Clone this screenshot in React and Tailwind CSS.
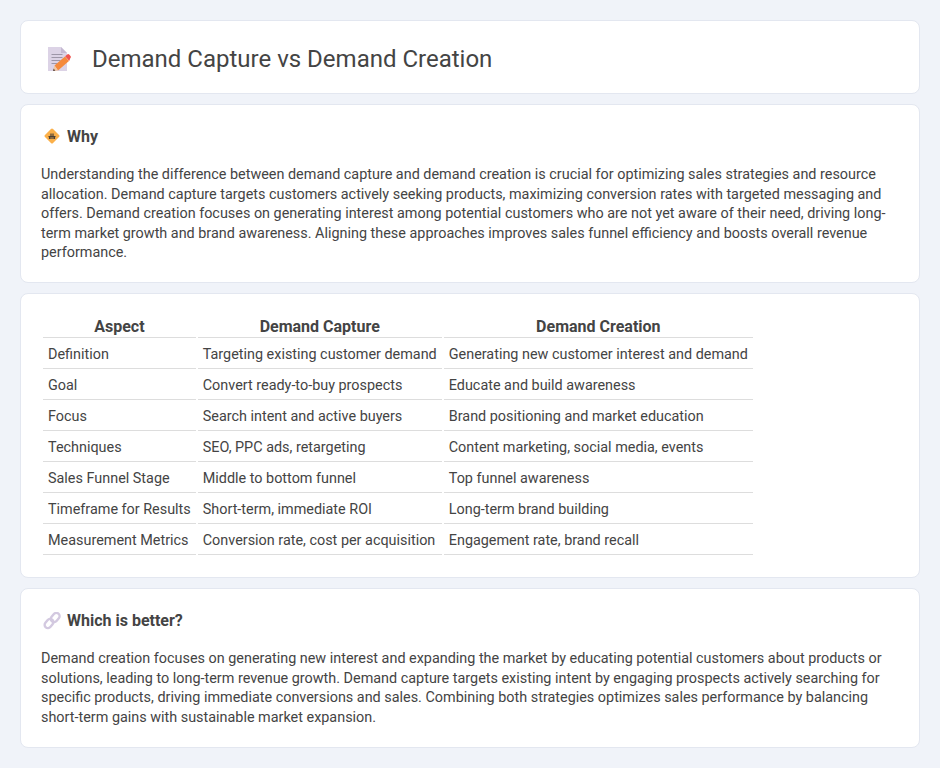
const rows = [
  ["Definition", "Targeting existing customer demand", "Generating new customer interest and demand"],
  ["Goal", "Convert ready-to-buy prospects", "Educate and build awareness"],
  ["Focus", "Search intent and active buyers", "Brand positioning and market education"],
  ["Techniques", "SEO, PPC ads, retargeting", "Content marketing, social media, events"],
  ["Sales Funnel Stage", "Middle to bottom funnel", "Top funnel awareness"],
  ["Timeframe for Results", "Short-term, immediate ROI", "Long-term brand building"],
  ["Measurement Metrics", "Conversion rate, cost per acquisition", "Engagement rate, brand recall"],
];

function MemoIcon() {
  return (
    <svg width="24" height="28" viewBox="0 0 24 28" className="shrink-0">
      <path d="M1 4h13l6 6v18H1z" fill="#dcd3e6" />
      <path d="M14 4l6 6h-6z" fill="#c5b9d2" />
      <path d="M4.500 11.500h11M4.500 14.500h11M4.500 17.500h9M4.500 20.500h6" stroke="#9d96a8" strokeWidth="1" />
      <path d="M7.500 22.500L18 13.500l4 4.500-11 9.500z" fill="#f58a3c" />
      <path d="M18.200 13.300l2-1.800a1.500 1.500 0 0 1 2 .1l1.300 1.500a1.500 1.500 0 0 1-.1 2l-1.200 2.900z" fill="#f0544f" />
      <path d="M7.500 22.500L6 28l5-.5z" fill="#f3c7a0" />
      <path d="M6.600 25.500L6 28l2.400-.3z" fill="#5a4a44" />
    </svg>
  );
}

function SignIcon() {
  return (
    <svg width="18" height="18" viewBox="0 0 18 18" className="shrink-0">
      <rect x="3.300" y="2.300" width="11.400" height="11.400" rx="1.500" transform="rotate(45 9 8)" fill="#fbb04a" />
      <path d="M6.500 11V8M8 11V5.500M10 11V5.500M11.500 11V8M5.500 8.500h7" stroke="#4a3f35" strokeWidth="1.200" fill="none" />
    </svg>
  );
}

function LinkIcon() {
  return (
    <svg width="18" height="18" viewBox="0 0 18 18" className="shrink-0">
      <g fill="none" stroke="#d3c9e0" strokeWidth="2.400">
        <rect x="9" y="0.500" width="6.400" height="10" rx="3.200" transform="rotate(40 12.200 5.500)" />
        <rect x="2.800" y="6.500" width="6.400" height="10" rx="3.200" transform="rotate(40 6 11.500)" />
      </g>
    </svg>
  );
}

function Card({ className = "", children }) {
  return <section className={"bg-white border border-[#e3e7f0] rounded-lg " + className}>{children}</section>;
}

function Heading({ icon, children }) {
  return (
    <h2 className="flex items-center gap-[6px] pl-[2px] text-base leading-[22px] font-bold text-[#444444]">
      {icon}
      {children}
    </h2>
  );
}

export default function App() {
  return (
    <div className="min-h-[768px] bg-[#f0f3f9] px-5 pt-5 pb-5 flex flex-col gap-[10px] text-[14.4px] leading-[19.5px] text-[#444444] font-['Roboto',sans-serif]">
      <Card className="h-[74px] flex items-center pl-[26px] gap-[21px]">
        <MemoIcon />
        <h1 className="mt-[3px] text-2xl leading-9 font-normal text-[#444444]">Demand Capture vs Demand Creation</h1>
      </Card>

      <Card className="h-[179px] pl-5 pr-5 pt-[21px]">
        <Heading icon={<SignIcon />}>Why</Heading>
        <p className="mt-[17px]">
          Understanding the difference between demand capture and demand creation is crucial for optimizing sales strategies and resource allocation. Demand capture targets customers actively seeking products, maximizing conversion rates with targeted messaging and offers. Demand creation focuses on generating interest among potential customers who are not yet aware of their need, driving long-term market growth and brand awareness. Aligning these approaches improves sales funnel efficiency and boosts overall revenue performance.
        </p>
      </Card>

      <Card className="h-[285px] pl-5 pt-[21px]">
        <table className="border-separate border-spacing-[2px]">
          <thead>
            <tr>
              {["Aspect", "Demand Capture", "Demand Creation"].map((h) => (
                <th key={h} className="px-[5px] text-center text-base leading-5 font-bold border-b border-[#dddddd]">{h}</th>
              ))}
            </tr>
          </thead>
          <tbody>
            {rows.map((r) => (
              <tr key={r[0]}>
                {r.map((c) => (
                  <td key={c} className="px-[5px] pt-[5px] pb-[3px] text-left leading-5 border-b border-[#dddddd]">{c}</td>
                ))}
              </tr>
            ))}
          </tbody>
        </table>
      </Card>

      <Card className="h-[160px] pl-5 pr-5 pt-[21px]">
        <Heading icon={<LinkIcon />}>Which is better?</Heading>
        <p className="mt-[17px]">
          Demand creation focuses on generating new interest and expanding the market by educating potential customers about products or solutions, leading to long-term revenue growth. Demand capture targets existing intent by engaging prospects actively searching for specific products, driving immediate conversions and sales. Combining both strategies optimizes sales performance by balancing short-term gains with sustainable market expansion.
        </p>
      </Card>
    </div>
  );
}
